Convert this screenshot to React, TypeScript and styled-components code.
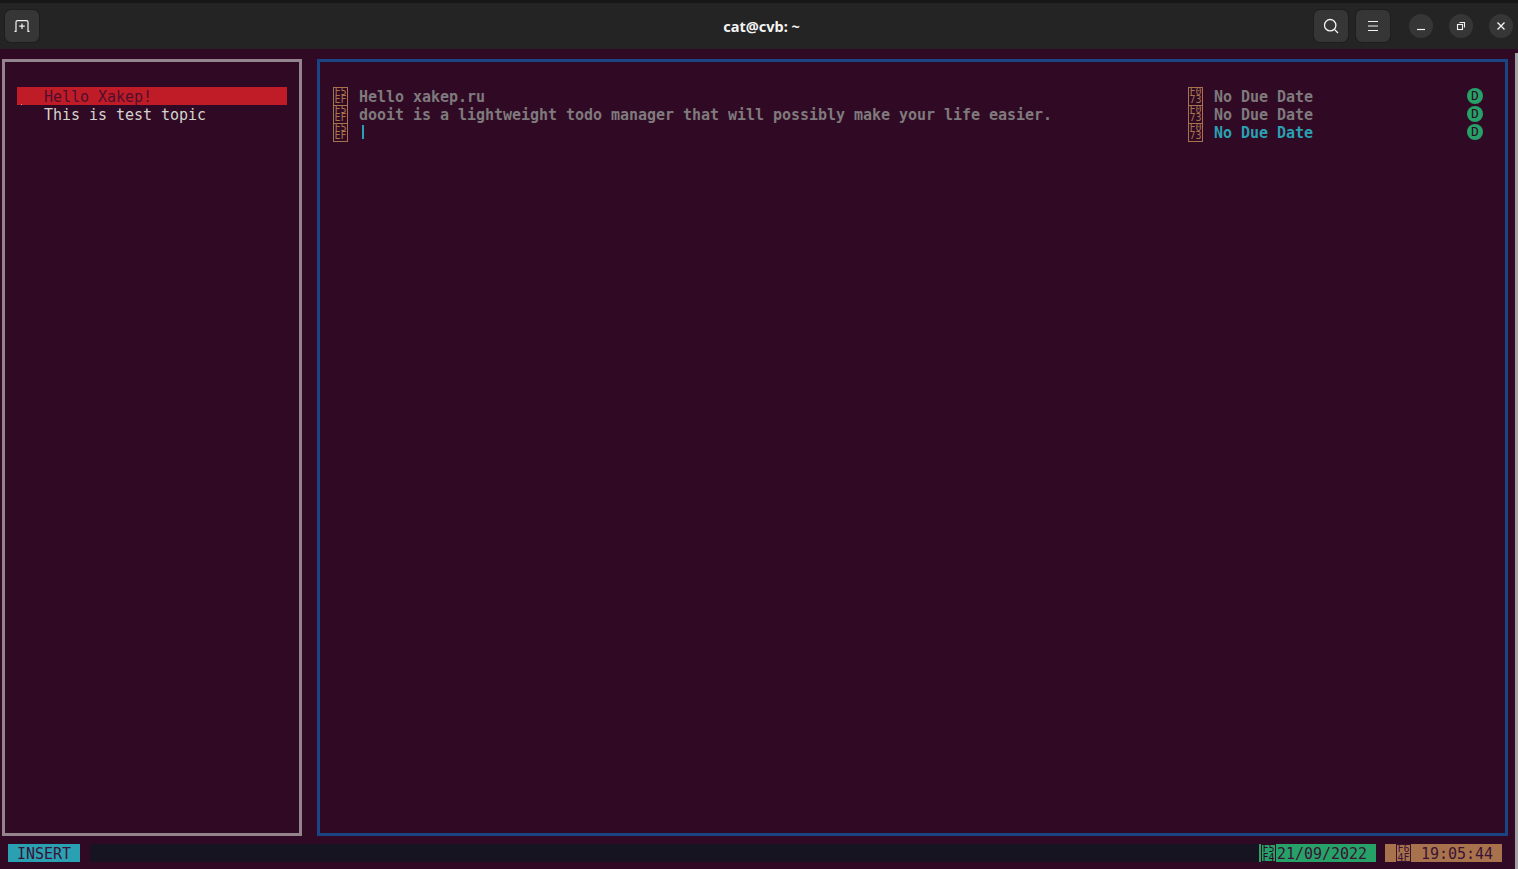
import React from "react";
import styled, { createGlobalStyle } from "styled-components";

const GlobalStyle = createGlobalStyle`
  html, body {
    margin: 0;
    padding: 0;
    background: #300a24;
  }
`;

const Screen = styled.div`
  width: 1518px;
  height: 869px;
  overflow: hidden;
  display: flex;
  flex-direction: column;
  background: #300a24;
  font-family: "DejaVu Sans Mono", monospace;
  font-size: 15px;
  letter-spacing: -0.03px;
  line-height: 18px;
  position: relative;
`;

// window header
const TitleBar = styled.header`
  height: 49px;
  box-sizing: border-box;
  flex: none;
  display: flex;
  align-items: center;
  padding: 0 5px;
  background: #242424;
  border-top: 3px solid #171717;
  position: relative;
`;

const Title = styled.div`
  position: absolute;
  left: 0;
  right: 0;
  top: 13px;
  text-align: center;
  color: #f4f4f4;
  font-family: "Noto Sans", sans-serif;
  font-weight: 700;
  font-size: 14.5px;
  line-height: 20px;
  letter-spacing: 0;
  padding-left: 5px;
`;

const HeaderButton = styled.div`
  width: 34px;
  height: 32px;
  display: flex;
  align-items: center;
  justify-content: center;
  background: #363636;
  border-radius: 6px;
  box-shadow: 0 0 0 1px #1e1e1e;
`;

const HeaderRight = styled.div`
  margin-left: auto;
  display: flex;
  align-items: center;
`;

const SearchButton = styled(HeaderButton)`
  margin-right: 8px;
`;

const MenuButton = styled(HeaderButton)`
  margin-right: 19px;
`;

const WindowButton = styled.div`
  width: 24px;
  height: 24px;
  margin-left: 16px;
  display: flex;
  align-items: center;
  justify-content: center;
  border-radius: 50%;
  background: #363636;
  &:first-of-type {
    margin-left: 0;
  }
`;

const Controls = styled.div`
  display: flex;
`;

// terminal area
const Terminal = styled.main`
  flex: 1;
  display: flex;
  flex-direction: column;
  padding: 10px 10px 0 2px;
`;

const Panels = styled.div`
  display: flex;
  gap: 15px;
  height: 777px;
`;

const TopicsPanel = styled.section`
  width: 300px;
  box-sizing: border-box;
  border: 3px solid #93848d;
  padding: 25px 12px 0;
`;

const TodosPanel = styled.section`
  flex: 1;
  box-sizing: border-box;
  border: 3px solid #1a4585;
  padding: 25px 12px 0 13px;
`;

const Topic = styled.div<{ $active?: boolean }>`
  height: 18px;
  padding-left: 27px;
  position: relative;
  white-space: pre;
  color: ${(p) => (p.$active ? "#4f0f2c" : "#d4d4ce")};
  background: ${(p) => (p.$active ? "#c01c28" : "transparent")};
`;

const TextLine = styled.span`
  display: block;
  position: relative;
  top: 1px;
`;

const Dot = styled.span`
  position: absolute;
  left: 4px;
  bottom: 0;
  width: 1px;
  height: 1px;
  background: #e8a0a0;
`;

const TodoRow = styled.div`
  height: 18px;
  display: flex;
  align-items: center;
`;

const HexBox = styled.div<{ $color: string }>`
  width: 15px;
  height: 19px;
  flex: none;
  box-sizing: border-box;
  border: 1px solid ${(p) => p.$color};
  color: ${(p) => p.$color};
  font-size: 10px;
  line-height: 8.5px;
  text-align: center;
  letter-spacing: 0;
  overflow: hidden;
`;

const TodoText = styled.span<{ $accent?: boolean }>`
  margin-left: 11px;
  white-space: pre;
  font-weight: 700;
  position: relative;
  top: 1px;
  color: ${(p) => (p.$accent ? "#2aa1b3" : "#7f7a7d")};
`;

const Description = styled.div`
  width: 855px;
  flex: none;
  display: flex;
  align-items: center;
`;

const Cursor = styled.span`
  width: 2px;
  height: 14px;
  margin-left: 14px;
  background: #2aa1b3;
`;

const DueCell = styled.div`
  width: 279px;
  flex: none;
  display: flex;
  align-items: center;
`;

const StatusDot = styled.div`
  width: 16px;
  height: 16px;
  flex: none;
  border-radius: 50%;
  background: #26a269;
  color: #300a24;
  font-size: 13px;
  line-height: 16px;
  letter-spacing: 0;
  text-align: center;
  margin-top: -1px;
`;

// bottom status line
const StatusLine = styled.footer`
  display: flex;
  align-items: stretch;
  height: 18px;
  margin: 8px 6px 0 6px;
  color: #3a1234;
`;

const Mode = styled.div`
  width: 72px;
  background: #2aa1b3;
  text-align: center;
`;

const Filler = styled.div`
  flex: 1;
  margin: 0 0 0 10px;
  background: #171421;
`;

const Segment = styled.div<{ $bg: string }>`
  display: flex;
  align-items: stretch;
  background: ${(p) => p.$bg};
  white-space: pre;
`;

const DateSegment = styled(Segment)`
  width: 117px;
  border-left: 1px solid #26a269;
  box-sizing: border-box;
`;

const TimeSegment = styled(Segment)`
  width: 117px;
  margin-left: 9px;
  padding-left: 10px;
  box-sizing: border-box;
`;

const StatusHex = styled(HexBox)`
  height: 18px;
  margin-left: 1px;
`;

const DateText = styled(TextLine)`
  margin-left: 1px;
`;

const TimeText = styled(TextLine)`
  margin-left: 10px;
`;

const EdgeStrip = styled.div`
  position: absolute;
  right: 0;
  top: 53px;
  width: 3px;
  bottom: 0;
  background: #a3a3a3;
`;

const Hex: React.FC<{ code: [string, string]; color?: string }> = ({ code, color = "#a8724c" }) => (
  <HexBox $color={color}>
    {code[0]}
    <br />
    {code[1]}
  </HexBox>
);

const rows = ["Hello xakep.ru", "dooit is a lightweight todo manager that will possibly make your life easier.", ""];

export default function App() {
  return (
    <Screen>
      <GlobalStyle />
      <TitleBar>
        <HeaderButton>
          <svg width="16" height="12" viewBox="0 0 16 12" fill="none" stroke="#f2f2f2" strokeWidth="1.2">
            <path d="M0.5 11.4H2V2Q2 0.6 3.4 0.6H12.6Q14 0.6 14 2V11.4H15.5" />
            <path d="M8 3.5v5.5M5.2 6.2h5.6" />
          </svg>
        </HeaderButton>
        <Title>cat@cvb: ~</Title>
        <HeaderRight>
          <SearchButton>
            <svg width="16" height="16" viewBox="0 0 16 16" fill="none" stroke="#f2f2f2" strokeWidth="1.3">
              <circle cx="7.2" cy="7.2" r="5.7" />
              <path d="M11.4 11.4L15 15" />
            </svg>
          </SearchButton>
          <MenuButton>
            <svg width="12" height="12" viewBox="0 0 12 12" stroke="#f2f2f2" strokeWidth="1.2">
              <path d="M1 1.5h10M1 6h10M1 10.5h10" />
            </svg>
          </MenuButton>
          <Controls>
            <WindowButton>
              <svg width="10" height="10" viewBox="0 0 10 10" stroke="#f2f2f2" strokeWidth="1.2">
                <path d="M1 8.5h8" />
              </svg>
            </WindowButton>
            <WindowButton>
              <svg width="10" height="10" viewBox="0 0 10 10" fill="none" stroke="#f2f2f2" strokeWidth="1.1">
                <rect x="1.5" y="3.5" width="5" height="5" />
                <path d="M3.5 1.5h5v5" />
              </svg>
            </WindowButton>
            <WindowButton>
              <svg width="10" height="10" viewBox="0 0 10 10" stroke="#f2f2f2" strokeWidth="1.4">
                <path d="M1.5 1.5l7 7M8.5 1.5l-7 7" />
              </svg>
            </WindowButton>
          </Controls>
        </HeaderRight>
      </TitleBar>
      <Terminal>
        <Panels>
          <TopicsPanel>
            <Topic $active>
              <Dot />
              <TextLine>Hello Xakep!</TextLine>
            </Topic>
            <Topic>
              <TextLine>This is test topic</TextLine>
            </Topic>
          </TopicsPanel>
          <TodosPanel>
            {rows.map((text, i) => (
              <TodoRow key={i}>
                <Description>
                  <Hex code={["F5", "EF"]} />
                  {text ? <TodoText>{text}</TodoText> : <Cursor />}
                </Description>
                <DueCell>
                  <Hex code={["F0", "73"]} />
                  <TodoText $accent={i === 2}>No Due Date</TodoText>
                </DueCell>
                <StatusDot>D</StatusDot>
              </TodoRow>
            ))}
          </TodosPanel>
        </Panels>
        <StatusLine>
          <Mode>
            <TextLine>INSERT</TextLine>
          </Mode>
          <Filler />
          <DateSegment $bg="#26a269">
            <StatusHex $color="#300a24">
              F5
              <br />
              F4
            </StatusHex>
            <DateText>21/09/2022</DateText>
          </DateSegment>
          <TimeSegment $bg="#a8724c">
            <StatusHex $color="#3a1234">
              F6
              <br />
              4F
            </StatusHex>
            <TimeText>19:05:44</TimeText>
          </TimeSegment>
        </StatusLine>
      </Terminal>
      <EdgeStrip />
    </Screen>
  );
}
